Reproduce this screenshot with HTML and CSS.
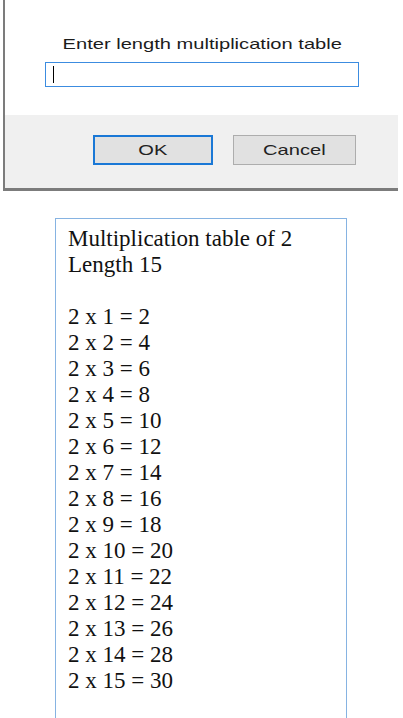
FILE: index.html
```html
<!DOCTYPE html>
<html>
<head>
<meta charset="utf-8">
<link rel="stylesheet" href="styles.css">
</head>
<body>
<div class="dialog">
  <div class="dialog-main">
    <div class="prompt"><span class="wide">Enter length multiplication table</span></div>
    <div class="field"><span class="caret"></span></div>
  </div>
  <div class="dialog-foot">
    <div class="btn btn-ok"><span class="wide">OK</span></div>
    <div class="btn btn-cancel"><span class="wide">Cancel</span></div>
  </div>
</div>
<div class="output">
  <div class="line">Multiplication table of 2</div>
  <div class="line">Length 15</div>
  <div class="line blank"></div>
  <div class="line">2 x 1 = 2</div>
  <div class="line">2 x 2 = 4</div>
  <div class="line">2 x 3 = 6</div>
  <div class="line">2 x 4 = 8</div>
  <div class="line">2 x 5 = 10</div>
  <div class="line">2 x 6 = 12</div>
  <div class="line">2 x 7 = 14</div>
  <div class="line">2 x 8 = 16</div>
  <div class="line">2 x 9 = 18</div>
  <div class="line">2 x 10 = 20</div>
  <div class="line">2 x 11 = 22</div>
  <div class="line">2 x 12 = 24</div>
  <div class="line">2 x 13 = 26</div>
  <div class="line">2 x 14 = 28</div>
  <div class="line">2 x 15 = 30</div>
</div>
</body>
</html>
```

FILE: styles.css
```css
html, body {
  margin: 0;
  padding: 0;
  background: #ffffff;
  overflow: hidden;
}

body {
  width: 403px;
  height: 718px;
}

.dialog {
  margin-left: 3px;
  width: 393px;
  border-left: 2px solid #7c7c7c;
  border-bottom: 3px solid #7c7c7c;
  font-family: "Liberation Sans", Arial, sans-serif;
  color: #1c1c1c;
}

.wide {
  display: inline-block;
  transform: scaleX(1.34);
}

.dialog-main {
  height: 115px;
  background: #ffffff;
  box-sizing: border-box;
  padding-top: 35px;
}

.prompt {
  font-size: 15px;
  line-height: 17px;
  text-align: center;
  padding-left: 2px;
}

.field {
  margin-top: 10px;
  margin-left: 40px;
  width: 314px;
  height: 25px;
  box-sizing: border-box;
  border: 1px solid #3c8ce0;
  display: flex;
  align-items: center;
  padding-left: 7px;
}

.caret {
  display: block;
  width: 1px;
  height: 17px;
  background: #000000;
}

.dialog-foot {
  height: 73px;
  background: #f0f0f0;
  box-sizing: border-box;
  padding-top: 20px;
  padding-left: 88px;
  display: flex;
  gap: 20px;
}

.btn {
  height: 30px;
  box-sizing: border-box;
  background: #e1e1e1;
  font-size: 15px;
  display: flex;
  align-items: center;
  justify-content: center;
  padding-bottom: 2px;
  color: #222222;
}

.btn-ok {
  width: 120px;
  border: 2px solid #1a78d6;
}

.btn-cancel {
  width: 123px;
  border: 1px solid #adadad;
}

.output {
  margin-top: 27px;
  margin-left: 55px;
  width: 292px;
  height: 560px;
  box-sizing: border-box;
  border: 1px solid #86b3e2;
  padding: 7px 0 0 12px;
  font-family: "Liberation Serif", "Times New Roman", serif;
  font-size: 23px;
  line-height: 26px;
  color: #111111;
}

.line {
  height: 26px;
  white-space: nowrap;
}
```
